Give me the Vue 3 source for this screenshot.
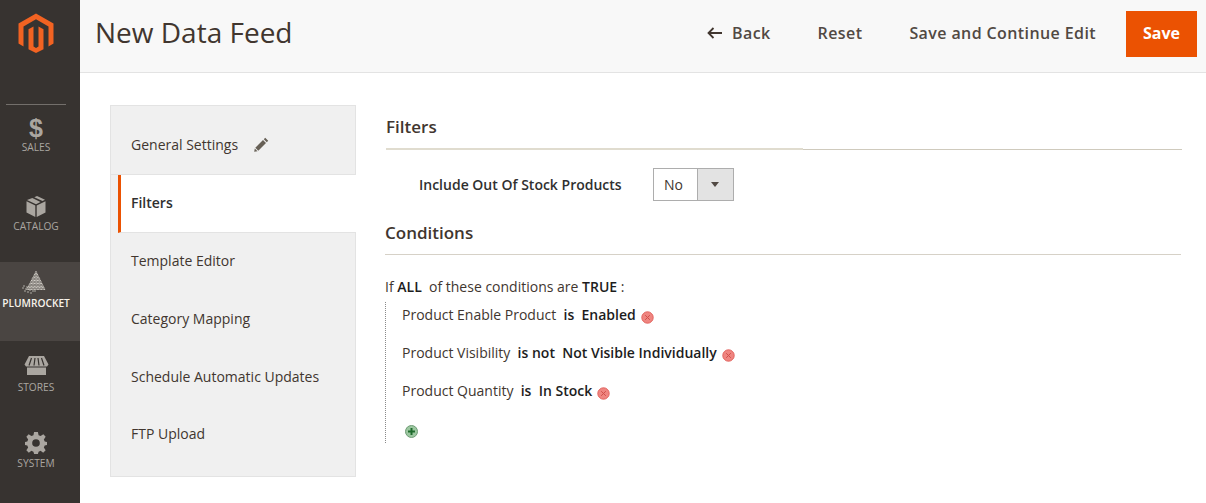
<template>
  <div class="page">
    <aside class="menu">
      <div class="logo">
        <svg width="36" height="40" viewBox="0 0 36 40">
          <path fill="#f26322" d="M18 0.5 35.500 10.500V30.500L30.500 33.400V13.400L18 6.200 5.500 13.400V33.400L0.500 30.500V10.500Z" />
          <path fill="#f26322" d="M10.500 16.200 15.500 13.400V33.600L18 35.100 20.500 33.600V13.400L25.500 16.200V36.300L18 40 10.500 36.300Z" />
        </svg>
      </div>
      <div class="menu-line"></div>
      <a v-for="item in menu" :key="item.label" class="menu-item" :class="[item.icon, { active: item.active }]">
        <svg v-if="item.icon === 'sales'" class="dollar-icon" width="18" height="28" viewBox="0 0 18 28">
          <text x="9" y="22.500" text-anchor="middle" class="dollar">$</text>
        </svg>
        <svg v-else-if="item.icon === 'catalog'" width="20" height="21" viewBox="0 0 20 21">
          <path fill="#aaa6a0" d="M11 0 19 3.800 16.500 5 8.300 1.200ZM6.300 2 14.500 6 10 8.200 1 4ZM0.500 5.300 9.300 9.400V21L0.500 16.500ZM19.500 5.300V16.500L10.700 21V9.400Z" />
        </svg>
        <svg v-else-if="item.icon === 'plum'" width="28" height="23" viewBox="0 0 28 23">
          <circle v-for="d in dots" :key="d[0] + '-' + d[1]" :cx="d[0]" :cy="d[1]" r="0.700" fill="#d3cfc8" />
        </svg>
        <svg v-else-if="item.icon === 'stores'" width="25" height="19" viewBox="0 0 25 19">
          <path fill="#aaa6a0" d="M5 0H20L24.500 8.500 23 10.500H2L0.500 8.500ZM3 11.500H22V19H3Z" />
          <path stroke="#373330" stroke-width="1.200" d="M7.500 2 5 9.500M11 2 10 9.500M14 2 15 9.500M17.500 2 20 9.500" />
        </svg>
        <svg v-else width="22" height="22" viewBox="0 0 23 23">
          <path fill="#aaa6a0" fill-rule="evenodd" d="M9.500 0H13.500L14.200 3.300 16.300 4.200 19.200 2.400 21.600 5 19.700 7.800 20.600 10 23 10.500V13.500L20.600 14.200 19.700 16.300 21.600 19 19 21.600 16.300 19.700 14.200 20.600 13.500 23H9.500L8.800 20.600 6.700 19.700 4 21.600 1.400 19 3.300 16.300 2.400 14.200 0 13.500V10.500L2.400 10 3.300 7.800 1.400 5 3.800 2.400 6.700 4.200 8.800 3.300ZM11.500 7.500A4 4 0 1 0 11.500 15.500 4 4 0 1 0 11.500 7.500Z" />
        </svg>
        <span>{{ item.label }}</span>
      </a>
    </aside>

    <div class="main">
      <header class="top">
        <h1>New Data Feed</h1>
        <div class="actions">
          <button class="action">
            <svg width="15" height="12" viewBox="0 0 15 12"><path fill="none" stroke="#41362f" stroke-width="1.800" d="M6.500 1 1.500 6 6.500 11M1.500 6H15" /></svg>
            Back
          </button>
          <button class="action">Reset</button>
          <button class="action">Save and Continue Edit</button>
          <button class="save">Save</button>
        </div>
      </header>

      <div class="body">
        <nav class="tabs">
          <a v-for="tab in tabs" :key="tab.label" class="tab" :class="{ current: tab.current, first: tab.edit }">
            {{ tab.label }}
            <svg v-if="tab.edit" class="pencil" width="15" height="15" viewBox="0 0 15 15">
              <path fill="#676056" d="M11.200 0.800 14.200 3.800 12.800 5.200 9.800 2.200ZM9 3 12 6 4.300 13.700 1.300 10.700ZM0.800 11.500 3.500 14.200 0.200 14.800Z" />
            </svg>
          </a>
        </nav>

        <section class="content">
          <h2 class="filters-title"><span>Filters</span></h2>
          <div class="field">
            <label>Include Out Of Stock Products</label>
            <div class="select">
              <span class="value">No</span>
              <span class="arrow"></span>
            </div>
          </div>

          <h2 class="conditions-title">Conditions</h2>
          <p class="rule-head">If <b>ALL</b>&nbsp; of these conditions are <b>TRUE</b> :</p>
          <ul class="rules">
            <li v-for="rule in rules" :key="rule.name">
              {{ rule.name }}&nbsp; <b>{{ rule.op }}</b>&nbsp; <b>{{ rule.value }}</b>
              <svg class="remove" width="13" height="13" viewBox="0 0 13 13">
                <circle cx="6.500" cy="6.500" r="5.700" fill="#ef8580" stroke="#e2635e" />
                <path stroke="#d04f4a" stroke-width="1" d="M4.200 4.200 8.800 8.800M8.800 4.200 4.200 8.800" />
              </svg>
            </li>
            <li class="add-row">
              <svg width="13" height="13" viewBox="0 0 13 13">
                <circle cx="6.500" cy="6.500" r="6" fill="#9cc7a0" stroke="#6f9c76" />
                <path stroke="#1e6b2c" stroke-width="2" d="M6.500 3V10M3 6.500H10" />
              </svg>
            </li>
          </ul>
        </section>
      </div>
    </div>
  </div>
</template>

<script setup>
const menu = [
  { label: 'SALES', icon: 'sales' },
  { label: 'CATALOG', icon: 'catalog' },
  { label: 'PLUMROCKET', icon: 'plum', active: true },
  { label: 'STORES', icon: 'stores' },
  { label: 'SYSTEM', icon: 'system' }
]

// dotted triangle of the plumrocket mark, plus the loose dots at its lower left
const dots = [[1, 17], [3, 20], [2, 15], [5, 16], [6, 21], [8, 19], [9, 22], [11, 20], [13, 20], [4, 18]]
for (let row = 0; row < 13; row++) {
  const y = 0.8 + row * 1.45
  const half = row * 0.74
  for (let x = 14 - half; x <= 14 + half + 0.1; x += 1.45) {
    dots.push([+x.toFixed(2), +y.toFixed(2)])
  }
}

const tabs = [
  { label: 'General Settings', edit: true },
  { label: 'Filters', current: true },
  { label: 'Template Editor' },
  { label: 'Category Mapping' },
  { label: 'Schedule Automatic Updates' },
  { label: 'FTP Upload' }
]

const rules = [
  { name: 'Product Enable Product', op: 'is', value: 'Enabled' },
  { name: 'Product Visibility', op: 'is not', value: 'Not Visible Individually' },
  { name: 'Product Quantity', op: 'is', value: 'In Stock' }
]
</script>

<style>
html,
body {
  margin: 0;
  background: #fff;
}
</style>

<style scoped>
.page {
  display: flex;
  width: 1206px;
  height: 503px;
  overflow: hidden;
  font-family: "Open Sans", sans-serif;
  color: #41362f;
}

.menu {
  flex: 0 0 80px;
  display: flex;
  flex-direction: column;
  background: #373330;
}

.logo {
  height: 104px;
  padding: 13px 0 0 18px;
  box-sizing: border-box;
}

.menu-line {
  width: 60px;
  height: 1px;
  margin-left: 6px;
  background: #736f6b;
}

.menu-item {
  display: flex;
  flex-direction: column;
  align-items: center;
  height: 78px;
  padding: 12px 8px 0 0;
  box-sizing: border-box;
  gap: 2px;
  font-size: 10.200px;
  line-height: 14px;
  color: #aaa6a0;
}

.menu-item.sales {
  height: 79px;
  padding-top: 9px;
  gap: 0;
}

.dollar-icon {
  margin-bottom: -2px;
}

.menu-item.plum {
  height: 79px;
  padding-top: 9px;
  background: #4a4542;
  color: #f7f3eb;
  font-weight: 600;
}

.menu-item.stores {
  padding-top: 15px;
  gap: 5px;
}

.menu-item.system {
  padding-top: 13px;
}

.dollar {
  font-family: "Liberation Sans", sans-serif;
  font-size: 25px;
  font-weight: 700;
  fill: #aaa6a0;
}

.main {
  flex: 1;
  min-width: 0;
}

.top {
  display: flex;
  align-items: center;
  justify-content: space-between;
  height: 72px;
  padding: 0 9px 0 15px;
  background: #f8f8f8;
  border-bottom: 1px solid #e3e3e3;
}

h1 {
  margin: 0 0 8px;
  font-size: 28px;
  font-weight: 400;
  color: #41362f;
}

.actions {
  display: flex;
  align-items: center;
  margin-bottom: 4px;
}

button {
  font-family: inherit;
  border: 0;
  cursor: pointer;
}

.action {
  display: flex;
  align-items: center;
  gap: 10px;
  height: 46px;
  padding: 0 15px 2px;
  margin-right: 17px;
  background: none;
  font-size: 16px;
  font-weight: 600;
  letter-spacing: 0.400px;
  color: #514943;
}

.action:nth-child(3) {
  margin-right: 15px;
}

.save {
  width: 71px;
  height: 46px;
  padding: 0 0 2px;
  background: #eb5202;
  color: #fff;
  font-size: 16px;
  font-weight: 700;
}

.body {
  display: flex;
  align-items: flex-start;
  padding: 32px 24px 0 30px;
}

.tabs {
  flex: 0 0 246px;
  box-sizing: border-box;
  height: 372px;
  padding-top: 10px;
  background: #f0f0f0;
  border: 1px solid #e3e3e3;
}

.tab {
  display: flex;
  align-items: center;
  height: 57.700px;
  padding: 0 0 2px 20px;
  box-sizing: border-box;
  font-size: 14px;
  color: #41362f;
}

.tab.first {
  height: 59px;
  padding-bottom: 1px;
  border-bottom: 1px solid #e3e3e3;
}

.tab.current {
  height: 58px;
  margin-left: 7px;
  margin-right: -1px;
  padding: 0 0 2px 10px;
  background: #fff;
  border-left: 3px solid #eb5202;
  border-bottom: 1px solid #e3e3e3;
  font-weight: 600;
  color: #303030;
}

.pencil {
  margin-left: 16px;
}

.content {
  flex: 1;
  min-width: 0;
  margin-left: 29px;
}

h2 {
  margin: 0;
  font-size: 17px;
  font-weight: 600;
  color: #41362f;
}

.filters-title {
  position: relative;
  height: 45px;
  margin-left: 1px;
  box-sizing: border-box;
  padding-top: 11px;
  line-height: 22px;
  border-bottom: 1px solid #cfcabd;
}

/* the heavier, paler stretch under the Filters heading */
.filters-title::after {
  content: "";
  position: absolute;
  left: 0;
  bottom: -1px;
  width: 417px;
  height: 2px;
  background: #e0dccf;
}

.field {
  display: flex;
  align-items: center;
  height: 34px;
  margin-top: 17px;
  padding-left: 34px;
}

.field label {
  width: 234px;
  font-size: 14px;
  font-weight: 600;
  color: #303030;
}

.select {
  display: flex;
  width: 81px;
  height: 33px;
  box-sizing: border-box;
  border: 1px solid #adadad;
  font-size: 14px;
}

.value {
  flex: 1;
  padding-left: 10px;
  line-height: 31px;
}

.arrow {
  position: relative;
  flex: 0 0 35px;
  background: #e3e3e3;
  border-left: 1px solid #adadad;
}

.arrow::after {
  content: "";
  position: absolute;
  left: 13px;
  top: 13px;
  border: 4px solid transparent;
  border-top: 5px solid #514943;
  border-bottom: 0;
}

.conditions-title {
  height: 40px;
  box-sizing: border-box;
  margin: 14px 1px 0 0;
  padding-top: 7px;
  line-height: 22px;
  border-bottom: 1px solid #d6d1c7;
}

.rule-head {
  margin: 22px 0 0;
  font-size: 14px;
  line-height: 20px;
  color: #41362f;
}

b {
  font-weight: 600;
  color: #1d1d1d;
}

.rules {
  margin: 5px 0 0;
  padding: 3px 0 0 16px;
  list-style: none;
  border-left: 1px dotted #8a8a8a;
  font-size: 14px;
  line-height: 20px;
}

.rules li {
  height: 38px;
}

.remove {
  margin-left: 5px;
  vertical-align: -4px;
}

.rules .add-row {
  height: 24px;
  padding: 4px 0 0 3px;
  box-sizing: border-box;
}
</style>
